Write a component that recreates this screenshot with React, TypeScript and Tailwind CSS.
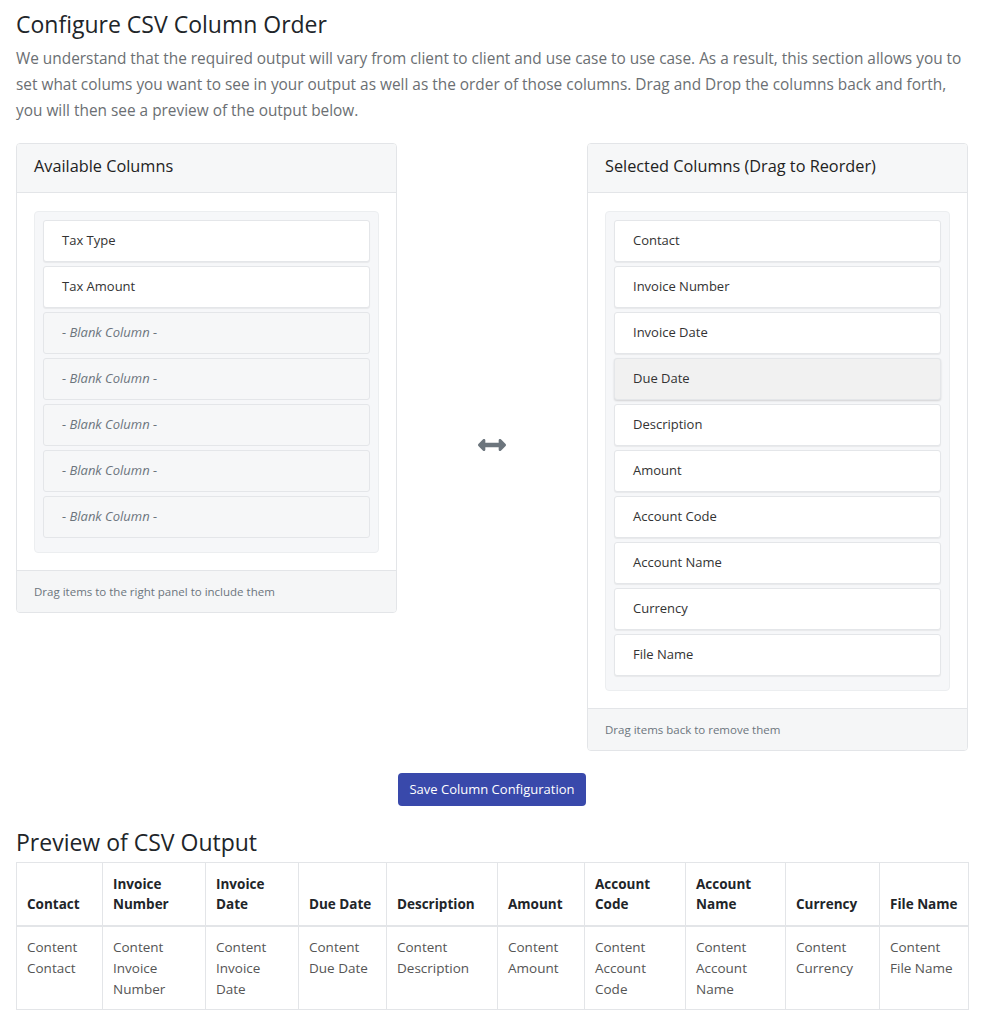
import { FaArrowsAltH } from "react-icons/fa";

const available = ["Tax Type", "Tax Amount"];
const blanks = [1, 2, 3, 4, 5];
const selected = [
  "Contact",
  "Invoice Number",
  "Invoice Date",
  "Due Date",
  "Description",
  "Amount",
  "Account Code",
  "Account Name",
  "Currency",
  "File Name",
];
// fixed widths so the preview table lines up with the screenshot
const colWidths = [
  "w-[86px]",
  "w-[103px]",
  "w-[93px]",
  "w-[88px]",
  "w-[111px]",
  "w-[87px]",
  "w-[101px]",
  "w-[100px]",
  "w-[94px]",
  "w-[89px]",
];

const Item = ({ label, blank, hover }: { label: string; blank?: boolean; hover?: boolean }) => {
  return (
    <div
      className={`h-[42px] flex items-center pl-[18px] border border-[#e4e6e9] rounded-[3px] text-[13px] ${
        blank
          ? "bg-[#f6f7f8] italic text-[#6c757d]"
          : hover
          ? "bg-[#f1f1f1] text-[#333] shadow-[0_1px_2px_rgba(0,0,0,0.15)]"
          : "bg-white text-[#333] shadow-[0_1px_1px_rgba(0,0,0,0.06)]"
      }`}
    >
      {label}
    </div>
  );
};

const Panel = ({ title, footer, children }: { title: string; footer: string; children: React.ReactNode }) => {
  return (
    <div className="border border-[#e3e5e8] rounded-[4px] bg-white overflow-hidden">
      <div className="h-[49px] flex items-center pb-[3px] px-[17px] bg-[#f6f7f8] border-b border-[#e3e5e8] text-[16.3px] text-[#222]">
        {title}
      </div>
      <div className="px-[17px] pt-[18px] pb-[17px]">
        <div className="bg-[#f6f7f9] border border-[#eceef0] rounded-[4px] px-[8px] pt-[8px] pb-[14px] flex flex-col gap-[4px]">
          {children}
        </div>
      </div>
      <div className="h-[42px] flex items-center px-[17px] bg-[#f5f6f7] border-t border-[#e3e5e8] text-[11.5px] text-[#6c757d]">
        {footer}
      </div>
    </div>
  );
};

export default function App() {
  return (
    <div className="bg-white min-h-[1024px] px-4 pt-[8px] font-['Open_Sans',sans-serif]">
      <h2 className="text-[23px] text-[#212529] leading-[32px]">Configure CSV Column Order</h2>
      <p className="mt-[6px] text-[15.4px] leading-[26px] text-[#6b6f73]">
        We understand that the required output will vary from client to client and use case to use case. As a result, this
        section allows you to set what colums you want to see in your output as well as the order of those columns. Drag
        and Drop the columns back and forth, you will then see a preview of the output below.
      </p>

      <div className="mt-[19px] grid grid-cols-[381px_1fr_381px] items-start">
        <Panel title="Available Columns" footer="Drag items to the right panel to include them">
          {available.map((a) => (
            <Item key={a} label={a} />
          ))}
          {blanks.map((b) => (
            <Item key={b} label="- Blank Column -" blank />
          ))}
        </Panel>
        <div className="flex justify-center pt-[288px] text-[#6c757d]">
          <FaArrowsAltH className="w-[28px] h-[28px]" />
        </div>
        <Panel title="Selected Columns (Drag to Reorder)" footer="Drag items back to remove them">
          {selected.map((s) => (
            <Item key={s} label={s} hover={s === "Due Date"} />
          ))}
        </Panel>
      </div>

      <div className="flex justify-center mt-[22px]">
        <button className="bg-[#3949ab] text-white text-[13px] h-[33px] px-[11px] rounded-[4px]">
          Save Column Configuration
        </button>
      </div>

      <h3 className="mt-[20px] text-[23px] leading-[32px] text-[#212529]">Preview of CSV Output</h3>
      <table className="mt-[4px] w-full table-fixed border-collapse border border-[#e3e5e8] text-[13.5px]">
        <thead>
          <tr className="border-b-2 border-[#e3e5e8]">
            {selected.map((s, i) => (
              <th
                key={s}
                className={`${colWidths[i]} border border-[#e3e5e8] align-bottom text-left font-bold text-[#212529] px-[10px] pt-[11px] pb-[11px] leading-[20px]`}
              >
                {s}
              </th>
            ))}
          </tr>
        </thead>
        <tbody>
          <tr>
            {selected.map((s) => (
              <td
                key={s}
                className="border border-[#e3e5e8] align-top text-[13.5px] text-[#555] px-[10px] pt-[10px] pb-[9px] leading-[21px]"
              >
                Content {s}
              </td>
            ))}
          </tr>
        </tbody>
      </table>
    </div>
  );
}
